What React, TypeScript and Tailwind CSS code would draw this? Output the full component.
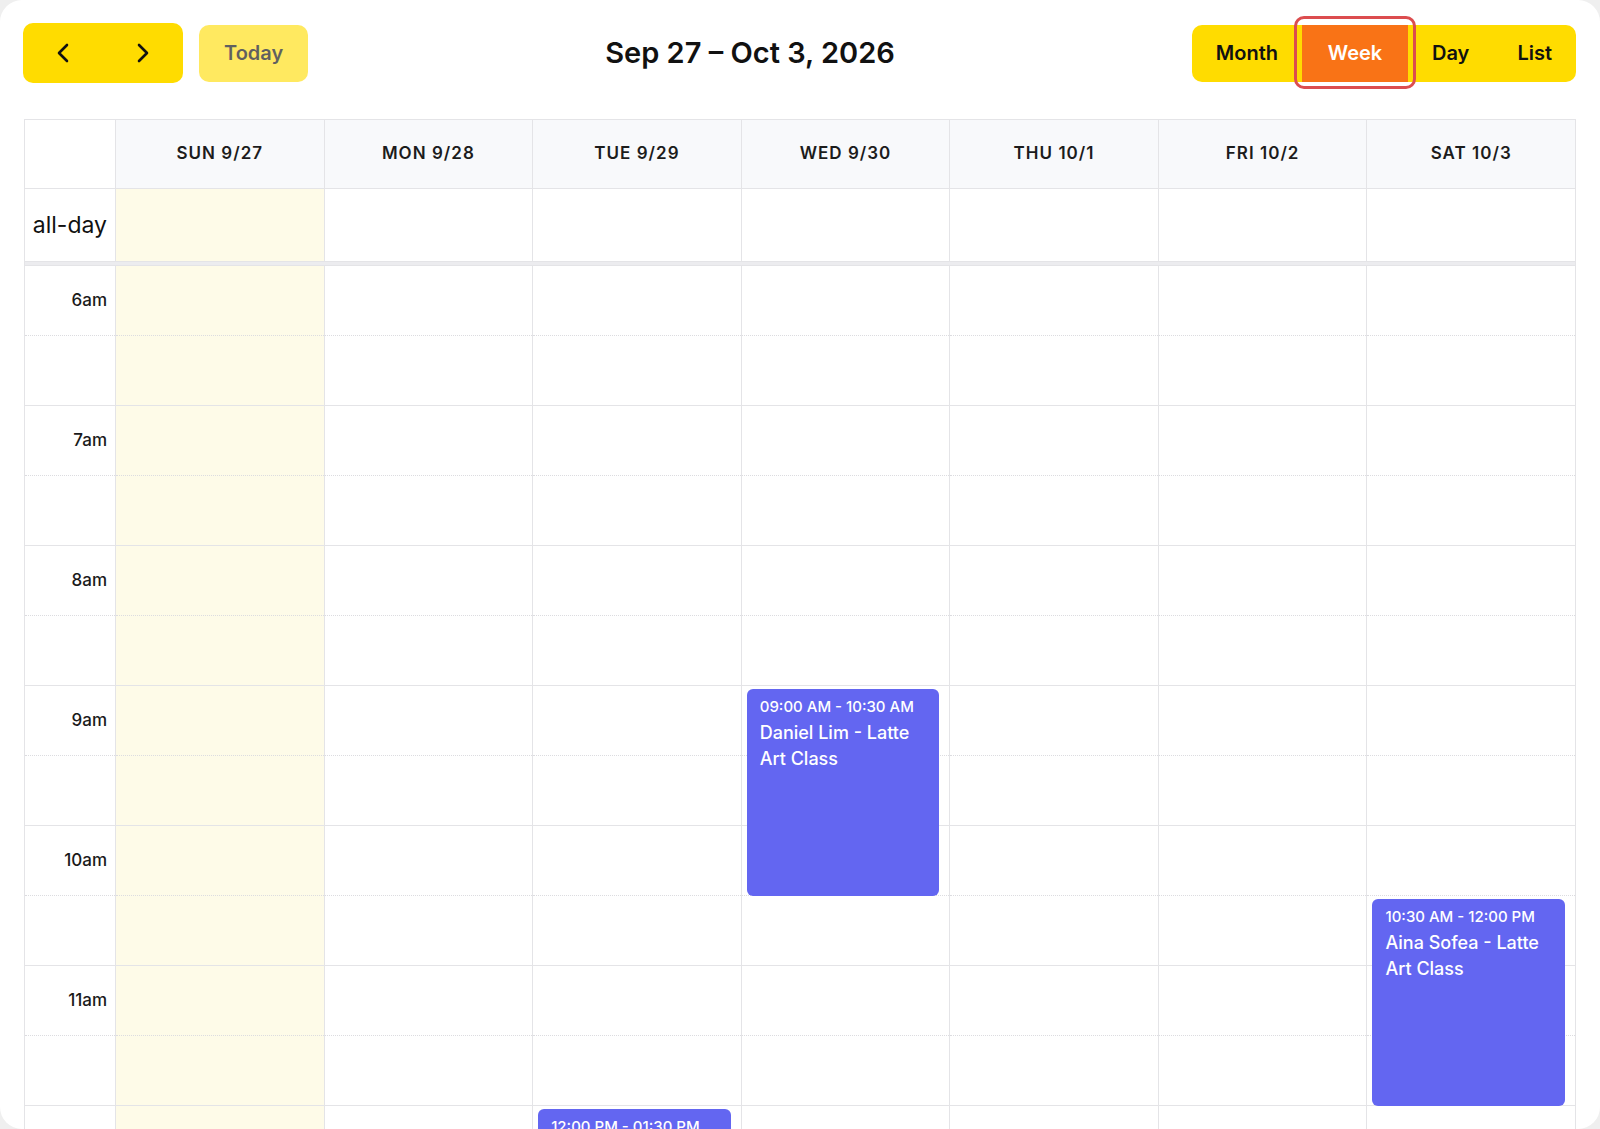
import { ReactNode } from 'react';

const days = ['Sun 9/27', 'Mon 9/28', 'Tue 9/29', 'Wed 9/30', 'Thu 10/1', 'Fri 10/2', 'Sat 10/3'];
const hours = ['6am', '7am', '8am', '9am', '10am', '11am', '12pm', '1pm'];

// events keyed by day index; top/height are in px from 6am (140px per hour)
const events = [
  { day: 3, top: 420, height: 210, time: '09:00 AM - 10:30 AM', title: 'Daniel Lim - Latte Art Class' },
  { day: 6, top: 630, height: 210, time: '10:30 AM - 12:00 PM', title: 'Aina Sofea - Latte Art Class' },
  { day: 2, top: 840, height: 210, time: '12:00 PM - 01:30 PM', title: 'Farah Aziz - Latte Art Class' },
];

const font = { fontFamily: 'Inter, "Noto Sans", sans-serif' };

function Chevron({ dir }: { dir: 'left' | 'right' }) {
  return (
    <svg width="14" height="20" viewBox="0 0 14 20" fill="none" stroke="#111" strokeWidth="2.6" strokeLinecap="round" strokeLinejoin="round">
      {dir === 'left' ? <path d="M11 2 L3 10 L11 18" /> : <path d="M3 2 L11 10 L3 18" />}
    </svg>
  );
}

function ViewButton({ children, active }: { children: ReactNode; active?: boolean }) {
  if (active) {
    return (
      <button className="relative h-full w-[106px] bg-[#f97316] text-white">
        {children}
        <span className="pointer-events-none absolute -left-2 -right-2 -top-[9px] -bottom-[7px] rounded-[10px] border-[3.5px] border-[#dc4d4f]" />
      </button>
    );
  }
  return <button className="h-full px-6 text-[#111]">{children}</button>;
}

function Slots({ today, label }: { today?: boolean; label?: boolean }) {
  return (
    <div className={today ? 'bg-[#fefbe8]' : ''}>
      {hours.map((h) => (
        <div key={h}>
          <div className="flex h-[70px] items-center justify-end border-b border-dotted border-[#dcdce0] pr-2">
            {label && <span className="text-[17px] font-medium text-[#1a1a1a]">{h}</span>}
          </div>
          <div className="h-[70px] border-b border-[#e4e4e7]" />
        </div>
      ))}
    </div>
  );
}

export default function App() {
  return (
    <div className="min-h-screen bg-[#efefef]" style={font}>
      <div className="h-screen overflow-hidden rounded-[22px] bg-white px-6 pt-[23px]">
        {/* Toolbar */}
        <div className="flex items-center justify-between">
          <div className="flex items-center gap-4">
            <div className="-ml-px flex h-[60px] overflow-hidden rounded-[10px] bg-[#ffdc00]">
              <button className="flex w-20 items-center justify-center"><Chevron dir="left" /></button>
              <button className="flex w-20 items-center justify-center"><Chevron dir="right" /></button>
            </div>
            <button className="h-[57px] rounded-[10px] bg-[#ffdc00] px-[25px] text-[20px] font-semibold text-black opacity-[0.62]">
              Today
            </button>
          </div>
          <h2 className="text-[29px] font-semibold text-[#111]">Sep 27 – Oct 3, 2026</h2>
          <div className="flex h-[57px] rounded-[10px] bg-[#ffdc00] text-[20px] font-semibold">
            <ViewButton>Month</ViewButton>
            <ViewButton active>Week</ViewButton>
            <ViewButton>Day</ViewButton>
            <ViewButton>List</ViewButton>
          </div>
        </div>

        {/* Week grid */}
        <div className="mt-9 border border-[#e4e4e7]">
          <div className="grid grid-cols-[90px_repeat(7,minmax(0,1fr))] border-b border-[#e4e4e7]">
            <div className="h-[68px]" />
            {days.map((d) => (
              <div key={d} className="flex h-[68px] items-center justify-center border-l border-[#e4e4e7] bg-[#f8f9fb] text-[17px] font-semibold uppercase tracking-[0.06em] text-[#1c1c1c]">
                {d}
              </div>
            ))}
          </div>
          <div className="grid grid-cols-[90px_repeat(7,minmax(0,1fr))] border-b border-[#e4e4e7]">
            <div className="flex h-[72px] items-center justify-end pr-2 text-[23px] text-[#111]">all-day</div>
            {days.map((d, i) => (
              <div key={d} className={`h-[72px] border-l border-[#e4e4e7] ${i === 0 ? 'bg-[#fefbe8]' : ''}`} />
            ))}
          </div>
          <div className="h-[4px] border-b border-[#e4e4e7] bg-[#ececef]" />

          <div className="grid grid-cols-[90px_repeat(7,minmax(0,1fr))]">
            <Slots label />
            {days.map((d, i) => (
              <div key={d} className="relative border-l border-[#e4e4e7]">
                <Slots today={i === 0} />
                {events
                  .filter((e) => e.day === i)
                  .map((e) => (
                    <div
                      key={e.time}
                      className="absolute left-[5px] right-[10px] rounded-[6px] bg-[#6366f1] px-[13px] pt-[7px] text-white"
                      style={{ top: e.top + 3, height: e.height - 3 }}
                    >
                      <div className="text-[15px] font-medium leading-[22px]">{e.time}</div>
                      <div className="mt-0.5 text-[18px] font-medium leading-[26px]">{e.title}</div>
                    </div>
                  ))}
              </div>
            ))}
          </div>
        </div>
      </div>
    </div>
  );
}
